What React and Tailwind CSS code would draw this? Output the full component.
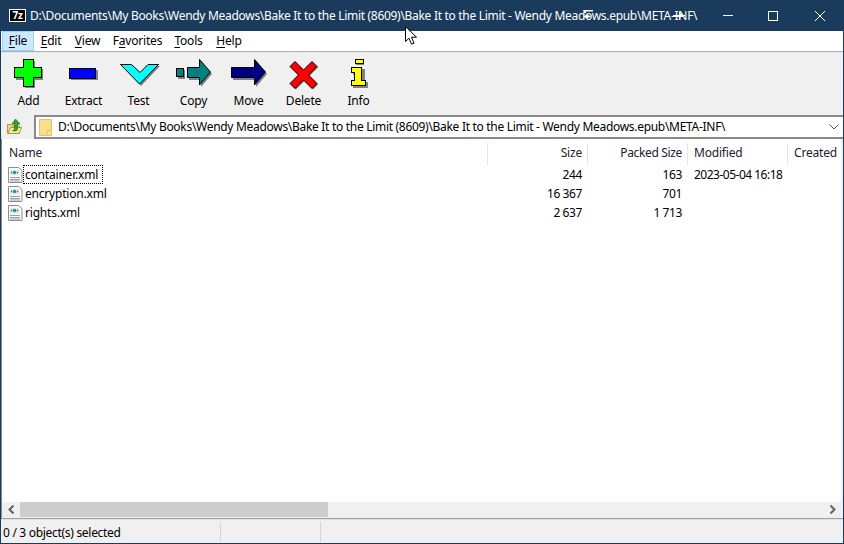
const FONT = "font-['Noto_Sans','Open_Sans',sans-serif]";

function Add() {
  return (
    <svg width="32" height="32" viewBox="-1 0 32 32" shapeRendering="crispEdges">
      <path d="M11 2h10v8h8v11h-8v8H11v-8H2V10h9z" fill="#808080" />
      <path d="M9.500 .5h10v8h8v10h-8v9h-10v-9h-9v-10h9z" fill="#00ff00" stroke="#000" />
    </svg>
  );
}
function Extract() {
  return (
    <svg width="32" height="14" viewBox="-1 0 32 14" shapeRendering="crispEdges">
      <rect x="2" y="2" width="27" height="10" fill="#808080" />
      <rect x=".5" y=".5" width="26" height="10" fill="#0000ff" stroke="#000" />
    </svg>
  );
}
function Test() {
  return (
    <svg width="42" height="24" viewBox="0 0 42 24">
      <path d="M4 3h11l7 7 8-7h12L23 23z" fill="#808080" />
      <path d="M2.500 1.500h11l8.500 8 8-8h10.500L21.500 21z" fill="#00ffff" stroke="#000" />
    </svg>
  );
}
function Copy() {
  return (
    <svg width="38" height="30" viewBox="-1 0 38 30">
      <rect x="2" y="11" width="7" height="9" fill="#808080" />
      <rect x=".5" y="9.500" width="7" height="8" fill="#008080" stroke="#000" />
      <path d="M13 10h12V2l11 13-11 13v-7H13z" fill="#808080" />
      <path d="M11.500 8.500h12V.5l11 12.500-11 13v-7.500h-12z" fill="#008080" stroke="#000" />
    </svg>
  );
}
function Move() {
  return (
    <svg width="38" height="30" viewBox="-1 0 38 30">
      <path d="M2 10h23V2l11 13-11 13v-7H2z" fill="#808080" />
      <path d="M.5 8.500h23V.5l11 12.500-11 13v-7.500H.5z" fill="#000080" stroke="#000" />
    </svg>
  );
}
function Del() {
  const d = "M0 5L5 0l8.500 8.500L22 0l5 5-8.500 8.500L27 22l-5 5-8.500-8.500L5 27l-5-5 8.500-8.500z";
  return (
    <svg width="30" height="32" viewBox="0 0 30 32">
      <path d={d} transform="translate(2 3.500)" fill="#808080" />
      <path d={d} transform="translate(1 2.500)" fill="#ff0000" stroke="#000" />
    </svg>
  );
}
function Info() {
  return (
    <svg width="18" height="30" viewBox="-1 0 18 30" shapeRendering="crispEdges">
      <path d="M5 2h8v4H5zM2 10h12v13h3v6H2v-6h4v-7H2z" fill="#808080" />
      <path d="M4.500 .5h8v4h-8zM.5 8.500h10v13h4v5H.5v-5h3v-8h-3z" fill="#ffff00" stroke="#000" />
    </svg>
  );
}

function XmlIcon() {
  return (
    <svg width="15" height="16" viewBox="0 0 15 16" className="shrink-0">
      <path d="M.5 .5h10l3.500 3v12H.5z" fill="#fafafa" stroke="#8a8f96" />
      <path d="M2 10.500h10M2 12.500h10M2 14h10" stroke="#9a9fa6" />
      <rect x="2" y="3" width="9" height="5.500" fill="#e4e8ec" />
      <circle cx="6.500" cy="5.500" r="1.800" fill="#1a9a9a" />
      <path d="M2.500 5.500l1.500-1.300v2.600zM10.500 5.500L9 4.200v2.600z" fill="#667" />
    </svg>
  );
}

const tools = [
  ["Add", Add, ""],
  ["Extract", Extract, "pt-[9px]"],
  ["Test", Test, "pt-[4px]"],
  ["Copy", Copy, ""],
  ["Move", Move, ""],
  ["Delete", Del, ""],
  ["Info", Info, ""],
];

const menus = [
  ["w-[32px]", "", "F", "ile"],
  ["w-[34px]", "", "E", "dit"],
  ["w-[39px]", "", "V", "iew"],
  ["w-[61px]", "F", "a", "vorites"],
  ["w-[41px]", "", "T", "ools"],
  ["w-[40px]", "", "H", "elp"],
];

const files = [
  ["container.xml", "244", "163", "2023-05-04 16:18"],
  ["encryption.xml", "16 367", "701", ""],
  ["rights.xml", "2 637", "1 713", ""],
];

const path = "D:\\Documents\\My Books\\Wendy Meadows\\Bake It to the Limit (8609)\\Bake It to the Limit - Wendy Meadows.epub\\META-INF\\";

export default function App() {
  return (
    <div className={`${FONT} relative w-[844px] h-[544px] overflow-hidden flex flex-col bg-[#f0f0f0] border-x border-b border-[#1a3b5c] text-[12px] leading-[16px] text-black tracking-[-0.2px]`}>
      {/* title bar */}
      <div className="h-[31px] shrink-0 bg-[#1a3b5c] flex items-center text-white">
        <div className="w-[15px] h-[11px] ml-[9px] bg-white border border-black flex items-center justify-center outline outline-white">
          <div className="w-[13px] h-[9px] bg-black text-white text-[10px] leading-[9px] font-bold text-center">7z</div>
        </div>
        <div className="ml-[5px] whitespace-nowrap tracking-[-0.3px]">{path}</div>
        <div className="ml-auto flex h-full items-center">
          <div className="w-[45px] flex justify-center"><div className="w-[10px] h-px bg-white" /></div>
          <div className="w-[46px] flex justify-center"><div className="w-[10px] h-[10px] border border-white" /></div>
          <div className="w-[47px] flex justify-center">
            <svg width="10" height="10" viewBox="0 0 10 10"><path d="M0 0l10 10M10 0L0 10" stroke="#fff" /></svg>
          </div>
        </div>
      </div>
      {/* menu */}
      <div className="h-[20px] shrink-0 bg-white flex pl-px">
        {menus.map(([w, pre, u, rest], i) => (
          <div key={i} className={`${w} flex items-center justify-center ${i === 0 ? "bg-[#cce8ff] border border-[#99d1ff]" : ""}`}>
            <span>{pre}<span className="underline underline-offset-2">{u}</span>{rest}</span>
          </div>
        ))}
      </div>
      <div className="h-[2px] shrink-0 bg-[#b0b0b0] border-b border-[#e8e8e8]" />
      {/* toolbar */}
      <div className="h-[62px] shrink-0 flex pt-[6px]">
        {tools.map(([label, Icon, pad]) => (
          <div key={label} className="w-[55px] flex flex-col items-center">
            <div className={`h-[32px] ${pad} flex justify-center`}><Icon /></div>
            <div className="mt-[2px]">{label}</div>
          </div>
        ))}
      </div>
      {/* address */}
      <div className="h-[24px] shrink-0 flex items-start">
        <div className="w-[33px] h-[24px] pl-[5px] pt-[3px]">
          <svg width="18" height="18" viewBox="0 0 18 18">
            <path d="M1.500 6.500h4l1 1.500h7v7.500h-12z" fill="#f2d97c" stroke="#b9943c" />
            <path d="M2 15.500l2.500-6h11l-2.500 6z" fill="#fbe9a5" stroke="#b9943c" />
            <path d="M9.500 1L14 6h-2.500v5c0 1-1 2-3 2l-2-.5c1.500 0 2-.5 2-1.500V6H6z" fill="#2fa52f" stroke="#136b13" strokeWidth=".7" />
          </svg>
        </div>
        <div className="flex-1 h-[24px] bg-white border-y-2 border-l-2 border-[#8a8a8a] flex items-center">
          <svg width="13" height="17" viewBox="0 0 13 17" className="ml-[3px] shrink-0">
            <path d="M.5 .5h12v16H.5z" fill="#fbdf8a" stroke="#e5c36a" />
            <path d="M8 16.500v-5h4.500" fill="none" stroke="#e5c36a" />
          </svg>
          <div className="ml-[6px] whitespace-nowrap tracking-[-0.3px]">{path}</div>
          <svg width="10" height="6" viewBox="0 0 10 6" className="ml-auto mr-[4px]"><path d="M.5 .5L5 5l4.500-4.500" fill="none" stroke="#555" /></svg>
        </div>
      </div>
      {/* list */}
      <div className="flex-1 min-h-0 bg-white border-l border-r-2 border-l-[#8a8a8a] border-r-[#f0f0f0] flex flex-col">
        <div className="h-[26px] shrink-0 pt-[4px] flex text-[#1a2230]">
          {[
            ["w-[485px] pl-[7px]", "Name"],
            ["w-[100px] text-right pr-[5px] border-l border-[#e5e5e5]", "Size"],
            ["w-[100px] text-right pr-[5px] border-l border-[#e5e5e5] tracking-[-0.35px]", "Packed Size"],
            ["w-[100px] pl-[6px] border-l border-[#e5e5e5]", "Modified"],
            ["flex-1 pl-[6px] border-l border-[#e5e5e5] whitespace-nowrap overflow-hidden", "Created"],
          ].map(([c, t]) => (
            <div key={t} className={`${c} h-[22px] leading-[20px]`}>{t}</div>
          ))}
        </div>
        <div className="flex-1 min-h-0">
          {files.map(([n, s, p, m], i) => (
            <div key={n} className="h-[19px] flex items-center">
              <div className="w-[485px] flex items-center pl-[6px]">
                <XmlIcon />
                <span className={`pl-px pr-[4px] border border-dotted ${i === 0 ? "border-black" : "border-transparent"} h-[19px] leading-[17px]`}>{n}</span>
              </div>
              <div className="w-[100px] text-right pr-[5px] tracking-[-0.4px]">{s}</div>
              <div className="w-[100px] text-right pr-[5px] tracking-[-0.4px]">{p}</div>
              <div className="w-[100px] pl-[7px] whitespace-nowrap tracking-[-0.5px]">{m}</div>
            </div>
          ))}
        </div>
        {/* scrollbar */}
        <div className="h-[16px] shrink-0 bg-[#f0f0f0] flex items-start">
          <div className="w-[18px] h-[15px] flex items-center justify-center">
            <svg width="7" height="9" viewBox="0 0 7 9"><path d="M5.500 .5L1.500 4.500l4 4" fill="none" stroke="#606060" strokeWidth="2" /></svg>
          </div>
          <div className="w-[308px] h-[15px] bg-[#cdcdcd]" />
          <div className="ml-auto w-[18px] h-[15px] flex items-center justify-center">
            <svg width="7" height="9" viewBox="0 0 7 9"><path d="M1.500 .5l4 4-4 4" fill="none" stroke="#606060" strokeWidth="2" /></svg>
          </div>
        </div>
      </div>
      <div className="h-[2px] shrink-0 bg-[#a0a0a0] border-b border-[#e0e0e0]" />
      {/* status */}
      <div className="h-[23px] shrink-0 flex items-center">
        <div className="w-[220px] h-[20px] pl-[2px] leading-[22px] border-r border-[#d5d5d5] tracking-[-0.3px]">0 / 3 object(s) selected</div>
        <div className="w-[100px] h-[20px] border-r border-[#d5d5d5]" />
      </div>
      {/* overlays: captured mouse cursor and title-bar artefacts */}
      <svg width="14" height="20" viewBox="0 0 14 20" className="absolute left-[403px] top-[26px]">
        <path d="M1.500 .5v15l3.500-3.300 2.500 6 2.500-1-2.500-6h5z" fill="#fff" stroke="#000" />
      </svg>
      <svg width="12" height="11" viewBox="0 0 12 11" className="absolute left-[581px] top-[10px]">
        <path d="M2 0h9v1.500H4V3H2zM1 6.500l4-2 4 2-4 2z" fill="#fff" />
      </svg>
      <svg width="13" height="10" viewBox="0 0 13 10" className="absolute left-[672px] top-[11px]">
        <path d="M0 4h6V1h1v2h3v1h2v1h-2v1H7v3H6V6H0z" fill="#fff" />
      </svg>
    </div>
  );
}
